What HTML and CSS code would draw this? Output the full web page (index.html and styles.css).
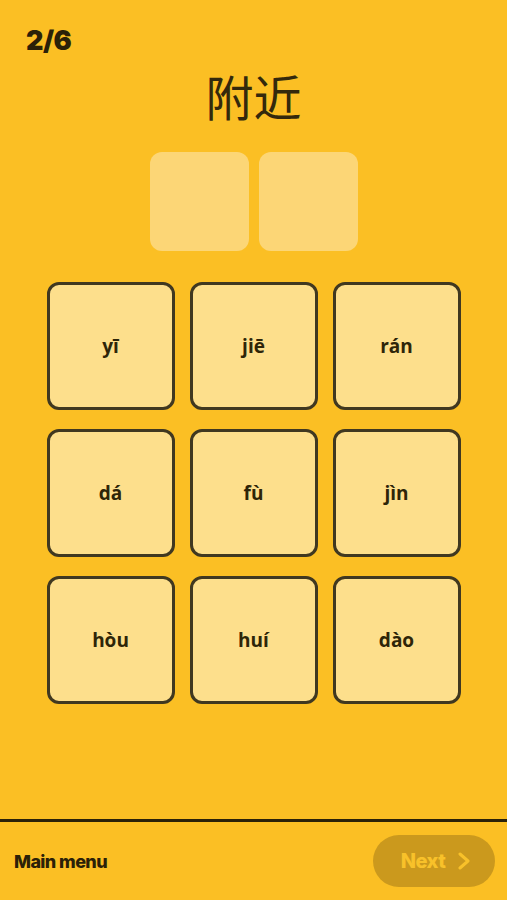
FILE: index.html
```html
<!DOCTYPE html>
<html lang="zh">
<head>
<meta charset="utf-8">
<link rel="stylesheet" href="styles.css">
</head>
<body>
<div class="app">
  <main class="main">
    <div class="counter">2/6</div>
    <h1 class="word">附近</h1>
    <div class="slots">
      <div class="slot"></div>
      <div class="slot"></div>
    </div>
    <div class="grid">
      <button class="tile">yī</button>
      <button class="tile">jiē</button>
      <button class="tile">rán</button>
      <button class="tile">dá</button>
      <button class="tile">fù</button>
      <button class="tile">jìn</button>
      <button class="tile">hòu</button>
      <button class="tile">huí</button>
      <button class="tile">dào</button>
    </div>
  </main>
  <footer class="footer">
    <span class="menu">Main menu</span>
    <button class="next">Next
      <svg class="chev" width="14" height="18" viewBox="0 0 14 18"><path d="M3 2 L11 9 L3 16" fill="none" stroke="currentColor" stroke-width="3" stroke-linecap="round" stroke-linejoin="round"/></svg>
    </button>
  </footer>
</div>
</body>
</html>
```

FILE: styles.css
```css
* { box-sizing: border-box; }
html, body { margin: 0; padding: 0; }
body {
  background: #fbbf24;
  color: #2e2508;
  font-family: "Inter", "Noto Sans", sans-serif;
}
.app {
  height: 900px;
  display: flex;
  flex-direction: column;
}
.main {
  flex: 1;
  display: flex;
  flex-direction: column;
  align-items: center;
}
.counter {
  align-self: flex-start;
  margin: 25px 0 0 26px;
  font-family: "Inter", sans-serif;
  font-weight: 900;
  font-size: 27px;
  line-height: 32px;
  letter-spacing: -0.5px;
  color: #2b2108;
}
.word {
  margin: 8px 0 0 0;
  font-family: "Noto Sans CJK SC", "Noto Sans", sans-serif;
  font-weight: 400;
  font-size: 48px;
  line-height: 60px;
  color: #33290c;
}
.slots {
  margin-top: 27px;
  display: flex;
  gap: 10px;
}
.slot {
  width: 99px;
  height: 99px;
  border-radius: 12px;
  background: #fcd676;
}
.grid {
  margin-top: 31px;
  display: grid;
  grid-template-columns: repeat(3, 128px);
  column-gap: 15px;
  row-gap: 19px;
}
.tile {
  width: 128px;
  height: 128px;
  border: 3px solid #403820;
  border-radius: 12px;
  background: #fddf8c;
  font-family: "Open Sans", "Noto Sans", sans-serif;
  font-weight: 700;
  font-size: 19px;
  color: #2e2508;
  padding: 0;
}
.footer {
  height: 81px;
  border-top: 3px solid #2b2108;
  display: flex;
  align-items: center;
  justify-content: space-between;
  padding: 0 12px 0 14px;
}
.menu {
  font-family: "Inter", sans-serif;
  font-weight: 800;
  font-size: 18px;
  letter-spacing: -0.6px;
  color: #2b2108;
}
.next {
  width: 122px;
  height: 52px;
  border: none;
  border-radius: 26px;
  background: #cb991d;
  color: #f8c12a;
  font-family: "Inter", sans-serif;
  font-weight: 800;
  font-size: 20px;
  letter-spacing: -0.5px;
  display: flex;
  align-items: center;
  justify-content: center;
  gap: 12px;
  padding: 0 0 0 4px;
}
.chev { display: block; }
```
